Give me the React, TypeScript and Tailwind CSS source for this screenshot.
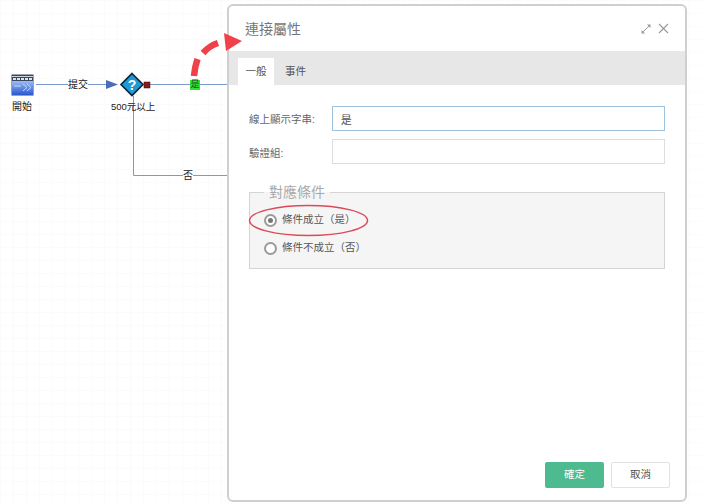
const font = "font-['Liberation_Sans','Noto_Sans_CJK_TC',sans-serif]";

function StartIcon() {
  return (
    <svg width="23" height="22" viewBox="0 0 23 22" className="absolute left-[11px] top-[74px]">
      <defs>
        <linearGradient id="startFill" x1="0" y1="0" x2="0" y2="1">
          <stop offset="0" stopColor="#9dbcf5" />
          <stop offset="1" stopColor="#2a58cc" />
        </linearGradient>
      </defs>
      <rect x="0.5" y="0.5" width="22" height="21" fill="#39465c" />
      <rect x="1" y="2" width="21" height="1" fill="#cfd3da" />
      <path d="M2 4h3v2H2zM6 4h3v2H6zM10 4h3v2h-3zM14 4h3v2h-3zM18 4h3v2h-3z" fill="#dfe3ea" />
      <rect x="1" y="7" width="21" height="14" fill="url(#startFill)" />
      <path d="M3 12h7M12 10l4 3.500-4 3.500M16 10l4 3.500-4 3.500" fill="none" stroke="#c4d8fb" strokeWidth="1" />
    </svg>
  );
}

function DiagramLines() {
  return (
    <svg width="702" height="504" className="absolute left-0 top-0">
      <g fill="none" stroke="#7b9bcb" strokeWidth="1">
        <path d="M36 84.500H106" />
        <path d="M150 84.500H230" />
        <path d="M133.500 96V175.500H230" />
      </g>
      <path d="M106 80L118 84.500L106 89Z" fill="#4a6fb8" />
      <path d="M132 73.500L143 84.500L132 95.500L121 84.500Z" fill="#1c9ad6" stroke="#0b2238" strokeWidth="1.600" />
      <rect x="144" y="82" width="6" height="6" fill="#8b1a1a" stroke="#3a1010" strokeWidth="0.5" />
    </svg>
  );
}

function RedMarks() {
  return (
    <svg width="702" height="504" className="pointer-events-none absolute left-0 top-0">
      <g fill="none" stroke="#f2404a" strokeWidth="6.500">
        <path d="M194 76C194.500 70 195.500 65 197.500 59" />
        <path d="M203 53C207 48.500 212 45 218 43" />
      </g>
      <path d="M224 33L242 41L226 51Z" fill="#f2404a" />
      <ellipse cx="308.500" cy="220.500" rx="59" ry="15" fill="none" stroke="#dc4a58" strokeWidth="1.500" />
    </svg>
  );
}

function Radio({checked, label}: {checked?: boolean; label: string}) {
  return (
    <div className="flex h-[28px] items-center">
      <span className="ml-[14px] flex h-[13px] w-[13px] items-center justify-center rounded-full border-2 border-[#9a9a9a] bg-white">
        {checked ? <span className="h-[5px] w-[5px] rounded-full bg-[#777]" /> : null}
      </span>
      <span className="ml-[5px] text-[10.500px] text-[#555]">{label}</span>
    </div>
  );
}

function Field({label, value, focused, labelClass}: {label: string; value: string; focused?: boolean; labelClass: string}) {
  return (
    <div className="flex h-[25px] items-center">
      <span className={`w-[83px] text-[10.500px] text-[#666] ${labelClass}`}>{label}</span>
      <input
        readOnly
        value={value}
        className={`h-[25px] w-[334px] border bg-white px-[8px] pt-[1px] text-[11px] text-[#555] outline-none ${focused ? 'border-[#9fc3dc]' : 'border-[#dedede]'}`}
      />
    </div>
  );
}

function PropertyDialog() {
  return (
    <div className="absolute left-[227px] top-[4px] flex h-[498px] w-[460px] flex-col rounded-[6px] border-2 border-[#cfcfcf] bg-white">
      <div className="flex h-[45px] items-center justify-between pl-[16px] pr-[16px]">
        <span className="pt-[1px] text-[14px] text-[#777]">連接屬性</span>
        <div className="flex items-center gap-[6px]">
          <svg width="12" height="12" viewBox="0 0 12 12" fill="none" stroke="#999" strokeWidth="1">
            <path d="M3 9L9 3" />
            <path d="M7 1.500H10.500V5Z" fill="#999" stroke="none" />
            <path d="M1.500 7V10.500H5Z" fill="#999" stroke="none" />
          </svg>
          <svg width="11" height="11" viewBox="0 0 11 11" fill="none" stroke="#999" strokeWidth="1.100">
            <path d="M1 1L10 10M10 1L1 10" />
          </svg>
        </div>
      </div>
      <div className="flex h-[34px] items-end bg-[#e7e7e7] pl-[9px]">
        <div className="flex h-[27px] w-[36px] items-center justify-center bg-white text-[10.500px] text-[#555]">一般</div>
        <div className="flex h-[27px] w-[43px] items-center justify-center text-[10.500px] text-[#555]">事件</div>
      </div>
      <div className="flex flex-1 flex-col px-[20px] pt-[21px]">
        <div className="flex flex-col gap-[8px]">
          <Field label="線上顯示字串:" value="是" focused labelClass="pt-[2px]" />
          <Field label="驗證組:" value="" labelClass="pt-[4px]" />
        </div>
        <fieldset className="mt-[19px] h-[86px] w-[416px] border border-[#d4d4d4] bg-[#f5f5f5]">
          <legend className="ml-[14px] px-[5px] text-[14px] leading-[18px] text-[#aaa]">對應條件</legend>
          <div className="mt-[5px] flex flex-col">
            <Radio checked label="條件成立（是）" />
            <Radio label="條件不成立（否）" />
          </div>
        </fieldset>
      </div>
      <div className="flex justify-end gap-[7px] pb-[12px] pr-[15px]">
        <button className="h-[26px] w-[59px] rounded-[2px] bg-[#4dba8f] text-[10.500px] text-white">確定</button>
        <button className="h-[26px] w-[59px] rounded-[2px] border border-[#e2e2e2] bg-white text-[10.500px] text-[#555]">取消</button>
      </div>
    </div>
  );
}

export default function App() {
  return (
    <div className={`${font} relative h-[504px] w-[702px] overflow-hidden bg-white bg-[linear-gradient(#fbfbfb_1px,transparent_1px),linear-gradient(90deg,#fbfbfb_1px,transparent_1px)] bg-[size:13px_13px]`}>
      <DiagramLines />
      <StartIcon />
      <span className="absolute left-[12px] top-[100px] text-[10px] leading-[13px] text-[#222]">開始</span>
      <span className="absolute left-[68px] top-[78px] bg-white text-[10px] leading-[13px] text-[#222]">提交</span>
      <svg width="24" height="24" viewBox="0 0 24 24" className="absolute left-[120px] top-[73px]">
        <text x="12" y="17" textAnchor="middle" fontSize="14" fontWeight="700" fill="#fff" fontFamily="Liberation Sans">?</text>
      </svg>
      <span className="absolute left-[111px] top-[100px] text-[9.500px] leading-[13px] text-[#222]">500元以上</span>
      <span className="absolute left-[190px] top-[80px] flex h-[10px] w-[10px] items-center justify-center bg-[#35e035] text-[9px] text-[#14501c]">是</span>
      <span className="absolute left-[183px] top-[169px] bg-white text-[10px] leading-[13px] text-[#222]">否</span>
      <PropertyDialog />
      <RedMarks />
    </div>
  );
}
